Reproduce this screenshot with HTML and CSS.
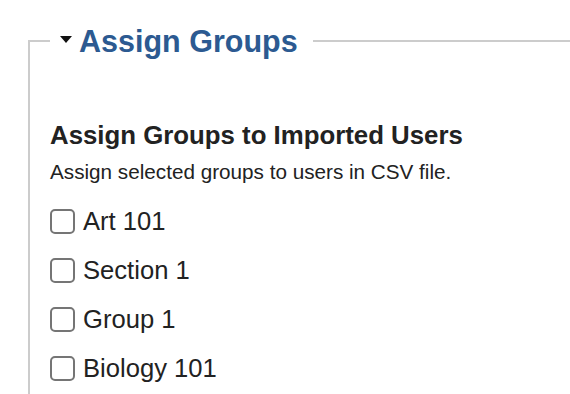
FILE: index.html
```html
<!DOCTYPE html>
<html lang="en">
  <head>
    <meta charset="UTF-8" />
    <meta name="viewport" content="width=device-width, initial-scale=1.0" />
    <title>Assign Groups</title>
    <link rel="stylesheet" href="styles.css">
  </head>
  <body>
    <fieldset class="group-box">
      <legend class="group-legend">
        <span class="caret"></span>
        <span class="legend-text">Assign Groups</span>
      </legend>

      <h3 class="section-title">Assign Groups to Imported Users</h3>
      <p class="section-help">Assign selected groups to users in CSV file.</p>

      <ul class="group-list">
        <li class="group-item">
          <input type="checkbox" id="g1" class="check" />
          <label for="g1">Art 101</label>
        </li>
        <li class="group-item">
          <input type="checkbox" id="g2" class="check" />
          <label for="g2">Section 1</label>
        </li>
        <li class="group-item">
          <input type="checkbox" id="g3" class="check" />
          <label for="g3">Group 1</label>
        </li>
        <li class="group-item">
          <input type="checkbox" id="g4" class="check" />
          <label for="g4">Biology 101</label>
        </li>
      </ul>
    </fieldset>
  </body>
</html>
```

FILE: styles.css
```css
* {
  box-sizing: border-box;
}
body {
  margin: 0;
  overflow: hidden;
  background: #fff;
  font-family: "Liberation Sans", Arial, sans-serif;
  color: #222;
}
.group-box {
  margin: 23px 0 0 28px;
  padding: 0 0 0 20px;
  height: calc(100vh - 23px);
  border: 2px solid #cccccc;
  border-right: none;
  border-bottom: none;
  min-width: 0;
}
.group-legend {
  padding: 0 15px 0 10px;
  line-height: 36px;
  display: flex;
  align-items: center;
}
.caret {
  display: inline-block;
  width: 0;
  height: 0;
  border-left: 6.5px solid transparent;
  border-right: 6.5px solid transparent;
  border-top: 7px solid #111;
  margin-right: 7px;
  margin-top: -4px;
}
.legend-text {
  font-size: 30.5px;
  font-weight: bold;
  color: #2c5a91;
}
.section-title {
  margin: 60px 0 0 0;
  font-size: 25.8px;
  line-height: 32px;
  font-weight: bold;
  color: #222;
}
.section-help {
  margin: 8px 0 0 0;
  font-size: 20.7px;
  line-height: 26px;
}
.group-list {
  list-style: none;
  margin: 21px 0 0 0;
  padding: 0;
  display: flex;
  flex-direction: column;
  gap: 19px;
}
.group-item {
  display: flex;
  align-items: center;
  height: 30px;
  font-size: 25.6px;
}
.check {
  -webkit-appearance: none;
  appearance: none;
  width: 25px;
  height: 25px;
  margin: 0 8px 0 0;
  border: 2px solid #757575;
  border-radius: 5px;
  background: #fff;
}
```
